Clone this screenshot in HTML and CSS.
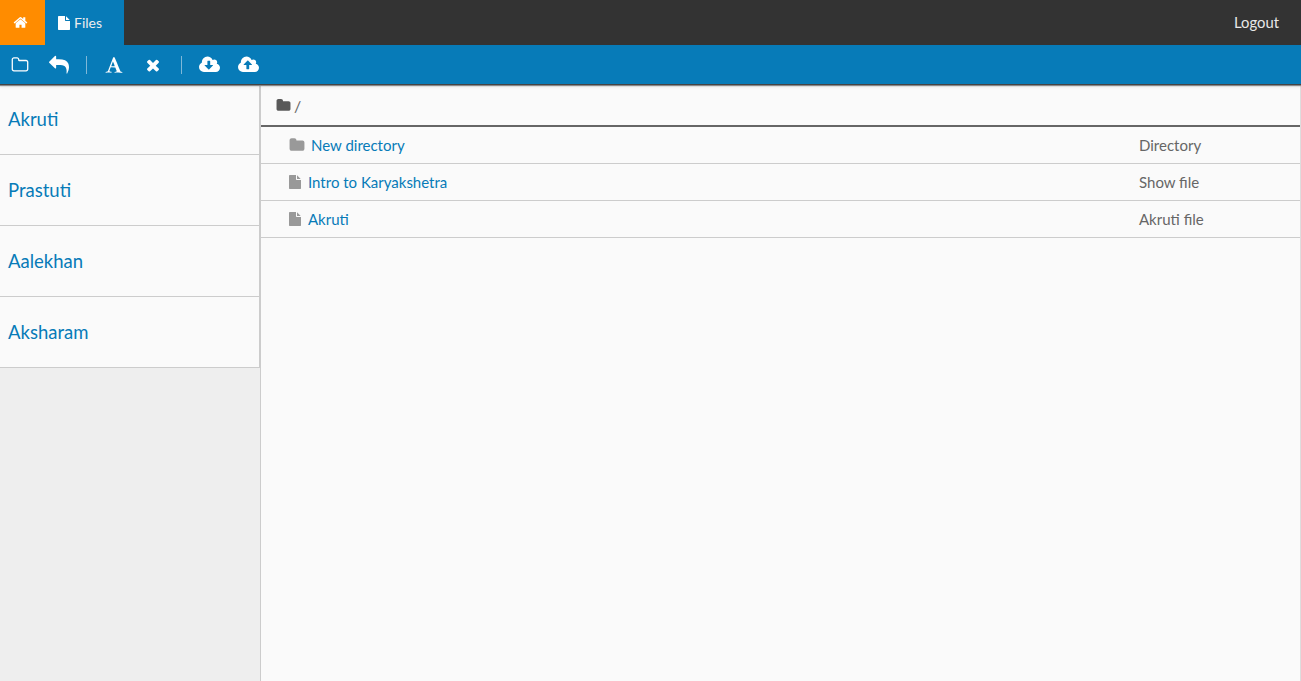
FILE: index.html
```html
<!DOCTYPE html>
<html lang="en">
<head>
<meta charset="utf-8">
<title>Files</title>
<link rel="stylesheet" href="styles.css">
</head>
<body>
<svg class="defs" aria-hidden="true">
  <symbol id="i-home" viewBox="0 0 1792 1792"><path d="M1472 992v480q0 26-19 45t-45 19h-384v-384h-256v384h-384q-26 0-45-19t-19-45v-480q0-1 .5-3t.5-3l575-474 575 474q1 2 1 6zm223-69l-62 74q-8 9-21 11h-3q-13 0-21-7l-692-577-692 577q-12 8-24 7-13-2-21-11l-62-74q-8-10-7-23.500t11-21.500l719-599q32-26 76-26t76 26l244 204v-195q0-14 9-23t23-9h192q14 0 23 9t9 23v408l219 182q10 8 11 21.500t-7 23.500z"/></symbol>
  <symbol id="i-file" viewBox="0 0 1792 1792"><path d="M1152 512v-472q22 14 36 28l408 408q14 14 28 36h-472zm-128 32q0 40 28 68t68 28h544v1056q0 40-28 68t-68 28h-1344q-40 0-68-28t-28-68v-1600q0-40 28-68t68-28h800v544z"/></symbol>
  <symbol id="i-folder" viewBox="0 0 1792 1792"><path d="M1728 608v704q0 92-66 158t-158 66h-1216q-92 0-158-66t-66-158v-960q0-92 66-158t158-66h320q92 0 158 66t66 158v32h672q92 0 158 66t66 158z"/></symbol>
  <symbol id="i-folder-o" viewBox="0 0 1792 1792"><path d="M1600 1312v-704q0-40-28-68t-68-28h-704q-40 0-68-28t-28-68v-64q0-40-28-68t-68-28h-320q-40 0-68 28t-28 68v960q0 40 28 68t68 28h1216q40 0 68-28t28-68zm128-704v704q0 92-66 158t-158 66h-1216q-92 0-158-66t-66-158v-960q0-92 66-158t158-66h320q92 0 158 66t66 158v32h672q92 0 158 66t66 158z"/></symbol>
  <symbol id="i-reply" viewBox="0 0 1792 1792"><path d="M1792 1120q0 166-127 451-3 7-10.500 24t-13.500 30-13 22q-12 17-28 17-15 0-23.500-10t-8.500-25q0-9 2.500-26.500t2.500-23.500q5-68 5-123 0-101-17.500-181t-48.500-138.500-80-101-105.500-69.500-133-42.500-154-21.500-175.500-6h-224v256q0 26-19 45t-45 19-45-19l-512-512q-19-19-19-45t19-45l512-512q19-19 45-19t45 19 19 45v256h224q713 0 875 403 53 134 53 333z"/></symbol>
  <symbol id="i-font" viewBox="0 0 1792 1792"><path d="M789 559l-170 450q33 0 136.500 2t160.500 2q19 0 57-2-87-253-184-452zm-725 1105l2-79q23-7 56-12.500t57-10.500 49.500-14.500 44.500-29 31-50.500l237-616 280-724h128q8 14 11 21l205 480q33 78 106 257.500t114 274.500q15 34 58 144.500t72 168.500q20 45 35 57 19 15 88 29.500t84 20.500q6 38 6 57 0 5-.5 13.500t-.5 12.500q-63 0-190-8t-191-8q-76 0-215 7t-178 8q0-43 4-78l131-28q1 0 12.500-2.500t15.500-3.500 14.500-4.500 15-6.500 11-8 9-11 2.500-14q0-16-31-96.500t-72-177.500-42-100l-450-2q-26 58-76.500 195.500t-50.500 162.500q0 22 14 37.500t43.500 24.500 48.500 13.500 57 8.500 41 4q1 19 1 58 0 9-2 27-58 0-174.500-10t-174.500-10q-8 0-26.500 4t-21.500 4q-80 14-188 14z"/></symbol>
  <symbol id="i-times" viewBox="0 0 1792 1792"><path d="M1490 1322q0 40-28 68l-136 136q-28 28-68 28t-68-28l-294-294-294 294q-28 28-68 28t-68-28l-136-136q-28-28-28-68t28-68l294-294-294-294q-28-28-28-68t28-68l136-136q28-28 68-28t68 28l294 294 294-294q28-28 68-28t68 28l136 136q28 28 28 68t-28 68l-294 294 294 294q28 28 28 68z"/></symbol>
  <symbol id="i-cloud-down" viewBox="0 0 1920 1792"><path d="M1280 928q0-14-9-23t-23-9h-224v-352q0-13-9.500-22.500t-22.500-9.500h-192q-13 0-22.500 9.500t-9.500 22.500v352h-224q-14 0-23 9t-9 23q0 12 10 24l352 352q9 9 23 9t23-9l351-351q11-13 11-25zm640 224q0 159-112.500 271.500t-271.500 112.500h-1088q-185 0-316.500-131.500t-131.500-316.500q0-130 70-240t188-165q-2-30-2-43 0-212 150-362t362-150q156 0 285.500 87t188.500 231q71-62 166-62 106 0 181 75t75 181q0 76-41 138 130 31 213.500 135.500t83.500 238.500z"/></symbol>
  <symbol id="i-cloud-up" viewBox="0 0 1920 1792"><path d="M1280 864q0-14-9-23l-352-352q-9-9-23-9t-23 9l-351 351q-11 13-11 25 0 14 9 23t23 9h224v352q0 13 9.500 22.500t22.500 9.500h192q13 0 22.500-9.500t9.500-22.500v-352h224q13 0 22.500-9.500t9.500-22.500zm640 288q0 159-112.500 271.500t-271.500 112.500h-1088q-185 0-316.500-131.500t-131.500-316.500q0-130 70-240t188-165q-2-30-2-43 0-212 150-362t362-150q156 0 285.500 87t188.500 231q71-62 166-62 106 0 181 75t75 181q0 76-41 138 130 31 213.500 135.500t83.500 238.500z"/></symbol>
</svg>

<header class="topbar">
  <a class="nav-home" href="#"><svg class="ic ic-home"><use href="#i-home"/></svg></a>
  <a class="nav-files" href="#"><svg class="ic ic-navfile"><use href="#i-file"/></svg>Files</a>
  <a class="nav-logout" href="#">Logout</a>
</header>

<nav class="toolbar">
  <svg class="ic tool t-folder"><use href="#i-folder-o"/></svg>
  <svg class="ic tool t-reply"><use href="#i-reply"/></svg>
  <span class="sep sep-a"></span>
  <svg class="ic tool t-font"><use href="#i-font"/></svg>
  <svg class="ic tool t-times"><use href="#i-times"/></svg>
  <span class="sep sep-b"></span>
  <svg class="ic tool t-cloud"><use href="#i-cloud-down"/></svg>
  <svg class="ic tool t-cloud t-up"><use href="#i-cloud-up"/></svg>
</nav>

<main class="layout">
  <aside class="sidebar">
    <a class="side-item" href="#">Akruti</a>
    <a class="side-item" href="#">Prastuti</a>
    <a class="side-item" href="#">Aalekhan</a>
    <a class="side-item" href="#">Aksharam</a>
  </aside>
  <section class="content">
    <div class="crumb"><svg class="ic ic-crumb"><use href="#i-folder"/></svg><span>/</span></div>
    <div class="row">
      <a class="row-name" href="#"><svg class="ic ic-rowfolder"><use href="#i-folder"/></svg>New directory</a>
      <span class="row-type">Directory</span>
    </div>
    <div class="row">
      <a class="row-name" href="#"><svg class="ic ic-rowfile"><use href="#i-file"/></svg>Intro to Karyakshetra</a>
      <span class="row-type">Show file</span>
    </div>
    <div class="row">
      <a class="row-name" href="#"><svg class="ic ic-rowfile"><use href="#i-file"/></svg>Akruti</a>
      <span class="row-type">Akruti file</span>
    </div>
  </section>
</main>
</body>
</html>
```
FILE: styles.css
```css
* { box-sizing: border-box; }
html, body { height: 100%; }
body {
  margin: 0;
  height: 681px;
  overflow: hidden;
  display: flex;
  flex-direction: column;
  background: #fafafa;
  color: #666;
  font-family: "Lato", "Noto Sans", sans-serif;
  font-size: 15px;
}
a { text-decoration: none; color: #077bb8; }
.defs { display: none; }
.ic { display: block; fill: currentColor; flex: none; }

.topbar {
  height: 45px;
  flex: none;
  display: flex;
  align-items: stretch;
  background: #333;
}
.nav-home {
  width: 45px;
  display: flex;
  align-items: center;
  justify-content: center;
  padding-right: 5px;
  background: #ff8c00;
  color: #fff;
}
.ic-home { width: 15px; height: 15px; }
.nav-files {
  width: 79px;
  display: flex;
  align-items: center;
  padding-left: 12px;
  background: #077bb8;
  color: #eee;
  font-size: 14px;
}
.ic-navfile { width: 14px; height: 14px; margin-right: 3px; color: #fff; }
.nav-logout {
  margin-left: auto;
  padding: 0 22px 2px 0;
  align-self: center;
  color: #e8e8e8;
  font-size: 14.8px;
}

.toolbar {
  position: relative;
  height: 39px;
  flex: none;
  display: flex;
  align-items: center;
  padding-left: 11px;
  background: #077bb8;
  color: #fff;
  box-shadow: 0 1px 0 #444, 0 2px 1px #888, 0 3px 3px rgba(0, 0, 0, .08);
}
.tool { height: 18px; width: 18px; }
.t-reply { width: 20px; height: 20px; margin-left: 20px; }
.sep { width: 1px; height: 18px; background: #7fb8d8; }
.sep-a { margin-left: 17px; }
.t-font { width: 18px; height: 18px; margin-left: 18px; }
.t-times { width: 18px; height: 18px; margin-left: 21px; }
.sep-b { margin-left: 19px; }
.t-cloud { width: 21px; height: 20px; margin-left: 17px; }
.t-up { margin-left: 18px; }

.layout { flex: 1; display: flex; min-height: 0; }
.sidebar {
  width: 261px;
  flex: none;
  background: #eee;
  border-right: 1px solid #ccc;
}
.side-item {
  display: flex;
  align-items: center;
  height: 71px;
  padding: 0 8px 1px;
  background: #fafafa;
  border-right: 1px solid #ccc;
  border-bottom: 1px solid #ccc;
  font-size: 18.5px;
  width: 260px;
}
.content { flex: 1; min-width: 0; border-right: 1px solid #ddd; }
.crumb {
  height: 43px;
  display: flex;
  align-items: center;
  padding: 2px 0 0 15px;
  border-bottom: 2px solid #666;
  color: #666;
  font-size: 16px;
}
.ic-crumb { width: 15px; height: 15px; margin-right: 3px; color: #595959; }
.row {
  height: 37px;
  display: flex;
  align-items: center;
  justify-content: space-between;
  padding-left: 28px;
  border-bottom: 1px solid #ccc;
}
.row-name { display: flex; align-items: center; }
.ic-rowfolder { width: 16px; height: 16px; margin-right: 6px; color: #999; }
.ic-rowfile { width: 14px; height: 14px; margin: 0 6px 0 -1px; color: #999; }
.row-type { width: 161px; color: #666; }
```
